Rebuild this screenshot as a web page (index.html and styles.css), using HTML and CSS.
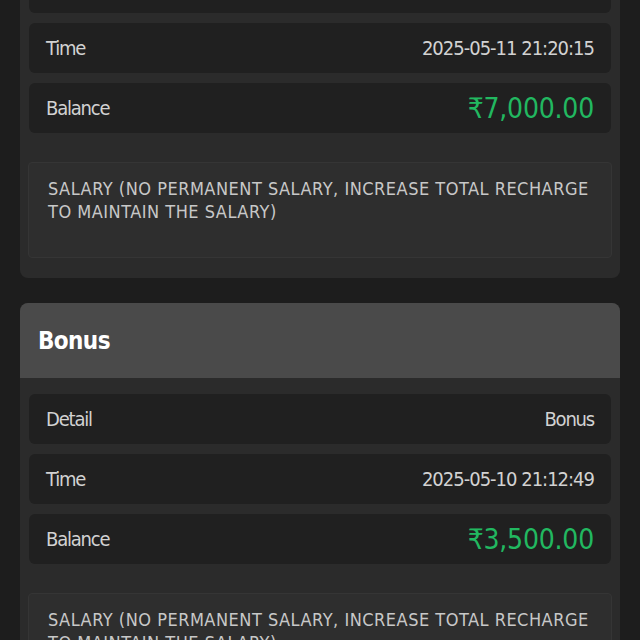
FILE: index.html
```html
<!DOCTYPE html>
<html lang="en">
<head>
    <meta charset="UTF-8">
    <meta name="viewport" content="width=device-width, initial-scale=1.0">
    <title>Records</title>
    <link rel="stylesheet" href="styles.css">
</head>
<body>
    <div class="list">
        <!-- Salary record (scrolled, header off screen) -->
        <div class="card card-cut">
            <div class="rows">
                <div class="row"><span class="label">Detail</span><span class="label">Salary</span></div>
                <div class="row"><span class="label">Time</span><span>2025-05-11 21:20:15</span></div>
                <div class="row"><span class="label">Balance</span><span class="amount">₹7,000.00</span></div>
            </div>
            <div class="note">SALARY (NO PERMANENT SALARY, INCREASE TOTAL RECHARGE TO MAINTAIN THE SALARY)</div>
        </div>

        <!-- Bonus record -->
        <div class="card">
            <div class="card-head">Bonus</div>
            <div class="rows">
                <div class="row"><span class="label">Detail</span><span class="label">Bonus</span></div>
                <div class="row"><span class="label">Time</span><span>2025-05-10 21:12:49</span></div>
                <div class="row"><span class="label">Balance</span><span class="amount">₹3,500.00</span></div>
            </div>
            <div class="note">SALARY (NO PERMANENT SALARY, INCREASE TOTAL RECHARGE TO MAINTAIN THE SALARY)</div>
        </div>
    </div>
</body>
</html>
```

FILE: styles.css
```css
body {
    margin: 0;
    background: #1d1d1d;
    font-family: 'DejaVu Sans Condensed', 'DejaVu Sans', sans-serif;
    color: #d2d2d2;
}
.list {
    display: flex;
    flex-direction: column;
    gap: 25px;
    padding: 0 20px;
    margin-top: -37px;
}
.card {
    background: #2b2b2b;
    border-radius: 8px;
    padding-bottom: 20px;
    overflow: hidden;
}
.card-head {
    background: #4a4a4a;
    color: #fff;
    font-size: 24px;
    font-weight: bold;
    letter-spacing: -0.6px;
    height: 75px;
    display: flex;
    align-items: center;
    padding-left: 18px;
}
.rows {
    display: flex;
    flex-direction: column;
    gap: 10px;
    padding: 16px 9px 0 9px;
}
.card-cut .rows {
    padding-top: 0;
}
.row {
    display: flex;
    justify-content: space-between;
    align-items: center;
    height: 50px;
    padding: 0 17px;
    background: #202020;
    border-radius: 6px;
    font-size: 20px;
    letter-spacing: -1px;
}
.label {
    letter-spacing: -1.2px;
}
.amount {
    color: #22b860;
    font-size: 28px;
    letter-spacing: -0.2px;
}
.note {
    margin: 29px 8px 0 8px;
    min-height: 96px;
    box-sizing: border-box;
    padding: 14px 19px;
    background: #2e2e2e;
    border: 1px solid #353535;
    border-radius: 4px;
    font-size: 18px;
    letter-spacing: 0.5px;
    line-height: 23px;
    color: #c8c8c8;
}
```
